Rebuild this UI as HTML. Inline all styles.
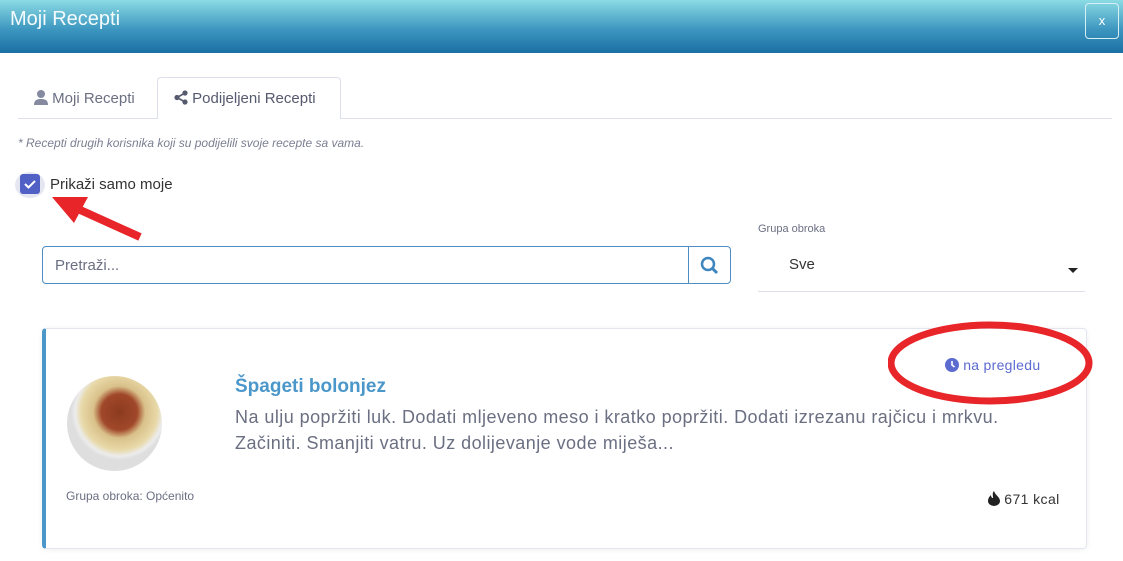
<!DOCTYPE html>
<html><head><meta charset="utf-8"><style>
*{box-sizing:border-box;margin:0;padding:0}
body{width:1123px;height:561px;overflow:hidden;background:#fff;font-family:"Liberation Sans",sans-serif;position:relative;color:#333}
.hdr{position:absolute;left:0;top:0;width:1123px;height:53px;background:linear-gradient(#8bdbe4,#3d97c0 55%,#1a6fa3)}
.hdr h1{position:absolute;left:10px;top:8px;font-size:20px;font-weight:normal;color:#f4fbfd}
.x{position:absolute;left:1085px;top:3px;width:34px;height:36px;border:1px solid #d8eef5;border-radius:4px;color:#fff;text-align:center;line-height:34px;font-size:13px}
.tabline{position:absolute;left:18px;top:118px;width:1094px;height:1px;background:#dde0ea}
.tab2{position:absolute;left:157px;top:77px;width:184px;height:42px;border:1px solid #dde0ea;border-bottom:none;border-radius:4px 4px 0 0;background:#fff}
.t{position:absolute;font-size:15px;color:#6b6f82}
.note{position:absolute;left:18px;top:136px;font-size:12px;font-style:italic;color:#7b7f92}
.cb{position:absolute;left:15px;top:172px;width:30px;height:26px;border-radius:50%;background:#e4e6f2}
.cbi{position:absolute;left:20px;top:174px;width:20px;height:20px;background:#5160c4;border-radius:3px}
.in{position:absolute;left:42px;top:246px;width:689px;height:38px;border:1px solid #4d8fc4;border-radius:4px}
.in span{position:absolute;left:12px;top:10px;font-size:15px;color:#6b6f82}
.sb{position:absolute;right:0;top:0;width:42px;height:36px;border-left:1px solid #4d8fc4}
.card{position:absolute;left:42px;top:328px;width:1045px;height:221px;border:1px solid #e3e6ef;border-left:4px solid #4b97ca;border-radius:4px;box-shadow:0 1px 6px rgba(0,0,0,.06)}
.img{position:absolute;left:67px;top:376px;width:95px;height:95px;border-radius:50%;background:radial-gradient(circle at 55% 38%,#8b3a1f 0,#a1482a 18px,#d9c08a 26px,#e8d9a8 38px,#ececec 44px,#dedede 48px)}
</style></head><body>
<div class="hdr"><h1>Moji Recepti</h1><div class="x">x</div></div>
<div class="tabline"></div><div class="tab2"></div>
<div class="t" style="left:34px;top:90px"><svg width="14" height="15" viewBox="0 0 14 15" style="vertical-align:-2px"><circle cx="7" cy="4" r="4" fill="#858aa0"/><path d="M0 15c0-5 3-6 7-6s7 1 7 6z" fill="#858aa0"/></svg> Moji Recepti</div>
<div class="t" style="left:174px;top:90px;color:#555a6e"><svg width="14" height="15" viewBox="0 0 14 15" style="vertical-align:-2px"><circle cx="11" cy="3" r="2.6" fill="#555a6e"/><circle cx="3" cy="7.5" r="2.6" fill="#555a6e"/><circle cx="11" cy="12" r="2.6" fill="#555a6e"/><path d="M11 3L3 7.5L11 12" stroke="#555a6e" stroke-width="1.6" fill="none"/></svg> Podijeljeni Recepti</div>
<div class="note">* Recepti drugih korisnika koji su podijelili svoje recepte sa vama.</div>
<div class="cb"></div><div class="cbi"><svg width="20" height="20"><path d="M5 10l3.5 3.5L15 7" stroke="#fff" stroke-width="2" fill="none"/></svg></div>
<div class="t" style="left:50px;top:176px;color:#333">Prikaži samo moje</div>
<svg style="position:absolute;left:50px;top:195px" width="100" height="50"><path d="M90 42L28 14" stroke="#e8262a" stroke-width="8"/><path d="M2 2L38 2L24 28z" fill="#e8262a"/></svg>
<div class="in"><span>Pretraži...</span><div class="sb"><svg width="42" height="36"><circle cx="19" cy="17" r="6" stroke="#3d86c0" stroke-width="2.5" fill="none"/><path d="M23 21l5 5" stroke="#3d86c0" stroke-width="3"/></svg></div></div>
<div class="t" style="left:758px;top:223px;font-size:11px;color:#6b6f82">Grupa obroka</div>
<div class="t" style="left:789px;top:256px;color:#333">Sve</div>
<div style="position:absolute;left:1068px;top:268px;border:5px solid transparent;border-top-color:#222"></div>
<div style="position:absolute;left:758px;top:291px;width:327px;height:1px;background:#dde0ea"></div>
<div class="card"></div>
<div class="img"></div>
<div class="t" style="left:235px;top:376px;font-size:19px;font-weight:bold;color:#4b97ca">Špageti bolonjez</div>
<div class="t" style="left:235px;top:404px;font-size:18px;line-height:26px;width:830px;letter-spacing:.45px">Na ulju popržiti luk. Dodati mljeveno meso i kratko popržiti. Dodati izrezanu rajčicu i mrkvu. Začiniti. Smanjiti vatru. Uz dolijevanje vode miješa...</div>
<div class="t" style="left:66px;top:489px;font-size:12px">Grupa obroka: Općenito</div>
<div class="t" style="left:945px;top:357px;font-size:14px;color:#5b6bd0;letter-spacing:.3px"><svg width="14" height="14" style="vertical-align:-2px"><circle cx="7" cy="7" r="7" fill="#5b6bd0"/><path d="M7 3v4l2.5 2" stroke="#fff" stroke-width="1.6" fill="none"/></svg> na pregledu</div>
<svg style="position:absolute;left:888px;top:318px" width="210" height="90"><ellipse cx="102" cy="45" rx="99" ry="38" stroke="#e8262a" stroke-width="7" fill="none"/></svg>
<div class="t" style="left:988px;top:491px;font-size:14px;color:#333;letter-spacing:.4px"><svg width="12" height="15" viewBox="0 0 12 15" style="vertical-align:-2px"><path d="M6 0C7 4 12 6 12 10a6 5 0 0 1-12 0C0 7 2 5 3 4c0 2 1 3 2 3C5 4 4 2 6 0z" fill="#222"/></svg> 671 kcal</div>
</body></html>
